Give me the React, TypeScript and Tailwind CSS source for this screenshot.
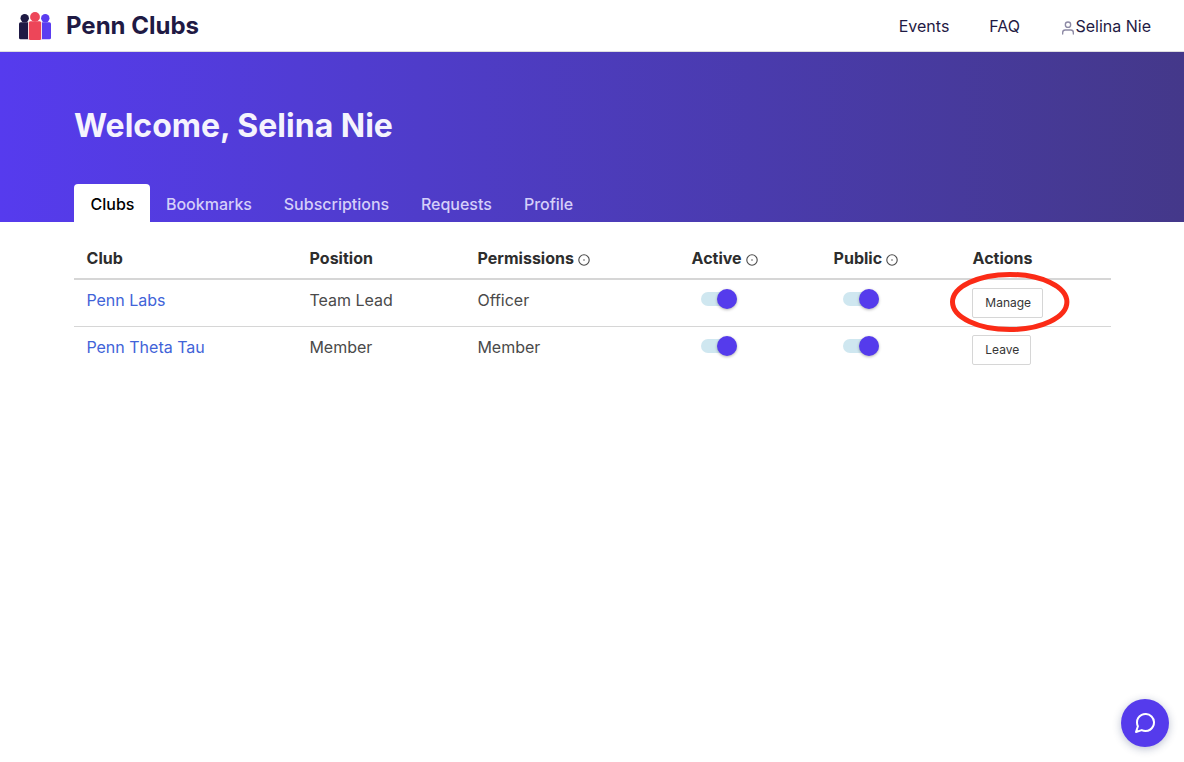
import type { ReactNode } from "react";

const clubs = [
  { name: "Penn Labs", position: "Team Lead", permissions: "Officer", action: "Manage" },
  { name: "Penn Theta Tau", position: "Member", permissions: "Member", action: "Leave" },
];

const columns = "grid grid-cols-[223px_168px_214px_142px_139px_151px]";

function Logo() {
  return (
    <svg width="32" height="28" viewBox="0 0 32 28">
      <circle cx="5.7" cy="6.3" r="4.2" fill="#1f1a44" />
      <rect x="0" y="10.3" width="11" height="17" rx="1.6" fill="#1f1a44" />
      <circle cx="26.3" cy="6.3" r="4.2" fill="#5b3df0" />
      <rect x="21" y="10.3" width="11" height="17" rx="1.6" fill="#5b3df0" />
      <circle cx="16" cy="4.9" r="5.6" fill="#fff" />
      <rect x="9" y="9" width="14" height="19" rx="1.8" fill="#fff" />
      <circle cx="16" cy="4.9" r="4.9" fill="#ed4659" />
      <rect x="9.8" y="9.2" width="12.4" height="18.8" rx="1.6" fill="#ed4659" />
    </svg>
  );
}

function UserIcon() {
  return (
    <svg width="16" height="16" viewBox="0 0 24 24" fill="none" stroke="#8d8aa5" strokeWidth="2" strokeLinecap="round" strokeLinejoin="round">
      <path d="M20 21v-2a4 4 0 0 0-4-4H8a4 4 0 0 0-4 4v2" />
      <circle cx="12" cy="7" r="4" />
    </svg>
  );
}

function InfoIcon() {
  return (
    <svg className="mt-[3px] ml-1" width="12" height="12" viewBox="0 0 12 12" fill="none">
      <circle cx="6" cy="6" r="5.2" stroke="#4a4a4a" strokeWidth="1.1" />
      <circle cx="6" cy="6.1" r="0.75" fill="#4a4a4a" />
    </svg>
  );
}

function Heading({ children, info }: { children: ReactNode; info?: boolean }) {
  return (
    <div className="flex h-6 items-center pl-[12.6px] text-[16px] leading-6 font-bold text-[#2d2d2d]">
      {children}
      {info && <InfoIcon />}
    </div>
  );
}

function Toggle() {
  return (
    <div className="flex pt-[9px] pl-[22px]">
      <div className="flex h-[20px] w-9 items-center">
        <div className="h-[14px] w-9 rounded-full bg-[#cfe7f0]" />
        <div className="-ml-5 h-5 w-5 shrink-0 rounded-full bg-[#553bec] shadow-[0_1px_3px_rgba(0,0,0,0.3)]" />
      </div>
    </div>
  );
}

export default function App() {
  return (
    <div className="relative h-[762px] w-full overflow-hidden bg-white font-['Inter',sans-serif] text-[#4a4a4a]">
      <header className="flex h-[52px] items-center border-b border-[#dddddf] pr-[33px] pl-[19px]">
        <Logo />
        <span className="ml-[15px] text-[24px] leading-8 font-bold text-[#1f1a44]">Penn Clubs</span>
        <nav className="ml-auto flex items-center text-[16px] leading-6 text-[#1f1a44]">
          <span>Events</span>
          <span className="ml-10">FAQ</span>
          <span className="ml-[40.4px] flex items-center">
            <span className="-mr-px pt-1"><UserIcon /></span>
            Selina Nie
          </span>
        </nav>
      </header>

      <section className="flex h-[170px] flex-col bg-linear-to-r from-[#563bee] to-[#44388a] px-[74px]">
        <h1 className="mt-[54px] text-[32px] leading-10 font-bold text-[#f5f3fd]">Welcome, Selina Nie</h1>
        <div className="mt-auto flex h-[38px] text-[16px] leading-[41px] font-medium text-[#d5cff9]">
          <span className="rounded-t bg-white pr-[15.5px] pl-[16.5px] text-black">Clubs</span>
          <span className="px-4">Bookmarks</span>
          <span className="pr-[15.7px] pl-[15.8px]">Subscriptions</span>
          <span className="px-4">Requests</span>
          <span className="px-4">Profile</span>
        </div>
      </section>

      <main className="mx-[74px] w-[1037px] pt-4">
        <div className={`${columns} h-[42px] border-b-2 border-[#d6d6d6] pt-2`}>
          <Heading>Club</Heading>
          <Heading>Position</Heading>
          <Heading info>Permissions</Heading>
          <Heading info>Active</Heading>
          <Heading info>Public</Heading>
          <Heading>Actions</Heading>
        </div>
        {clubs.map((club, i) => (
          <div key={club.name} className={`${columns} h-[47px] text-[16px] leading-6 ${i === 0 ? "border-b border-[#d6d6d6]" : ""}`}>
            <a className="pt-2 pl-[12.4px] text-[#4163d8]">{club.name}</a>
            <span className="pt-2 pl-[12.4px]">{club.position}</span>
            <span className="pt-2 pl-[12.4px]">{club.permissions}</span>
            <Toggle />
            <Toggle />
            <div className="pt-2 pl-3">
              <button className="block h-[30px] rounded-[2px] border border-[#d6d6d6] bg-white pr-[11.2px] pl-[12.3px] text-[12px] leading-[28px] text-[#363636]">
                {club.action}
              </button>
            </div>
          </div>
        ))}
      </main>

      <svg className="absolute top-[270px] left-[948px]" width="124" height="64" viewBox="0 0 124 64" fill="none">
        <ellipse cx="61.7" cy="32" rx="57.2" ry="27.6" stroke="#fb2b16" strokeWidth="5" />
      </svg>

      <button className="absolute top-[699px] left-[1121px] flex h-12 w-12 items-center justify-center rounded-full bg-[#553bec] shadow-[0_2px_8px_rgba(30,50,100,0.3)]">
        <svg width="24" height="24" viewBox="0 0 24 24" fill="none" stroke="#fff" strokeWidth="2" strokeLinecap="round" strokeLinejoin="round">
          <path d="M21 11.5a8.38 8.38 0 0 1-.9 3.8 8.5 8.5 0 0 1-7.6 4.7 8.38 8.38 0 0 1-3.8-.9L3 21l1.9-5.7a8.38 8.38 0 0 1-.9-3.8 8.5 8.5 0 0 1 4.7-7.6 8.38 8.38 0 0 1 3.8-.9h.5a8.48 8.48 0 0 1 8 8v.5z" />
        </svg>
      </button>
    </div>
  );
}
